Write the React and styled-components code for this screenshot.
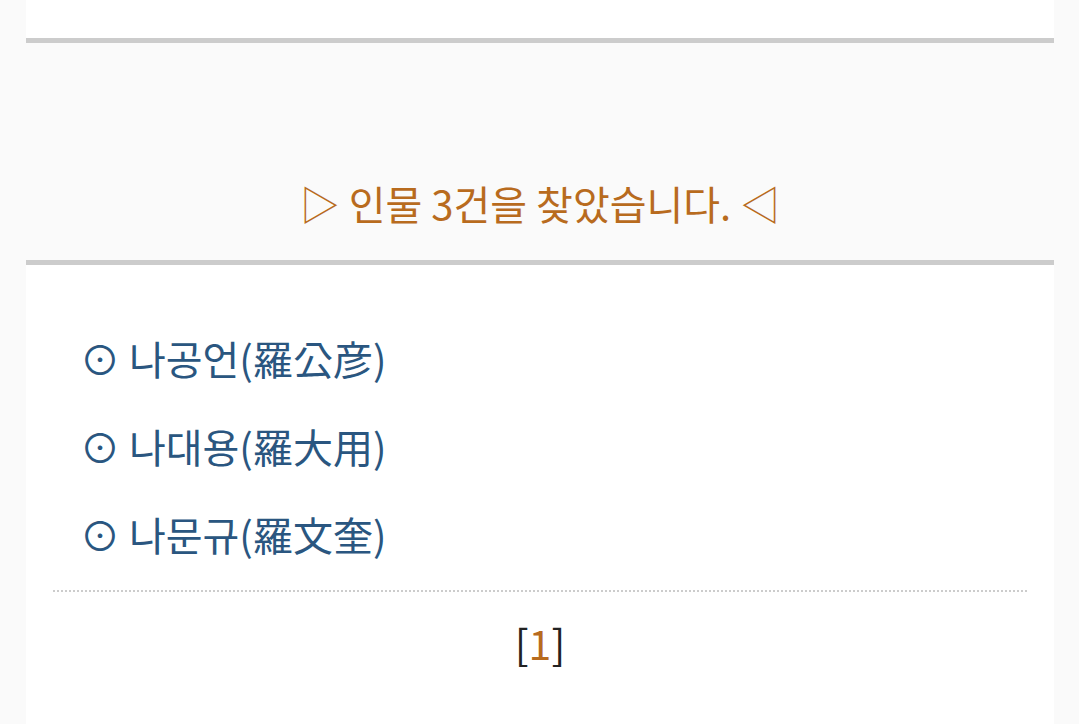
import React from "react";
import styled, { createGlobalStyle } from "styled-components";

const Global = createGlobalStyle`
  html, body { margin: 0; padding: 0; background: #fafafa; }
  body { font-family: "Noto Sans CJK KR", "Noto Sans", sans-serif; }
`;

const Page = styled.div`
  margin: 0 25px 0 26px;
  min-height: 724px;
  display: flex;
  flex-direction: column;
`;

const TopPanel = styled.div`
  height: 38px;
  background: #ffffff;
  border-bottom: 5px solid #cccccc;
`;

const Banner = styled.div`
  padding: 125px 0 22px;
  border-bottom: 5px solid #cccccc;
  text-align: center;
`;

const BannerText = styled.h2`
  margin: 0;
  font-weight: 400;
  font-size: 40px;
  line-height: 70px;
  color: #b86b1e;
`;

const ResultPanel = styled.div`
  flex: 1;
  background: #ffffff;
  padding: 49px 27px 40px;
`;

const List = styled.ul`
  list-style: none;
  margin: 0;
  padding: 0 0 12px 27px;
  border-bottom: 2px dotted #cccccc;
`;

const Item = styled.li`
  font-size: 40px;
  line-height: 88px;
  color: #2a5680;
  cursor: pointer;
`;

const Pager = styled.div`
  text-align: center;
  padding-top: 20px;
  font-size: 41px;
  line-height: 60px;
  color: #222;
`;

const PageNum = styled.span`
  color: #b86b1e;
`;

const people = ["나공언(羅公彦)", "나대용(羅大用)", "나문규(羅文奎)"];

export default function App() {
  return (
    <>
      <Global />
      <Page>
        <TopPanel />
        <Banner>
          <BannerText>▷ 인물 3건을 찾았습니다. ◁</BannerText>
        </Banner>
        <ResultPanel>
          <List>
            {people.map((p) => (
              <Item key={p}>⊙ {p}</Item>
            ))}
          </List>
          <Pager>
            [<PageNum>1</PageNum>]
          </Pager>
        </ResultPanel>
      </Page>
    </>
  );
}
